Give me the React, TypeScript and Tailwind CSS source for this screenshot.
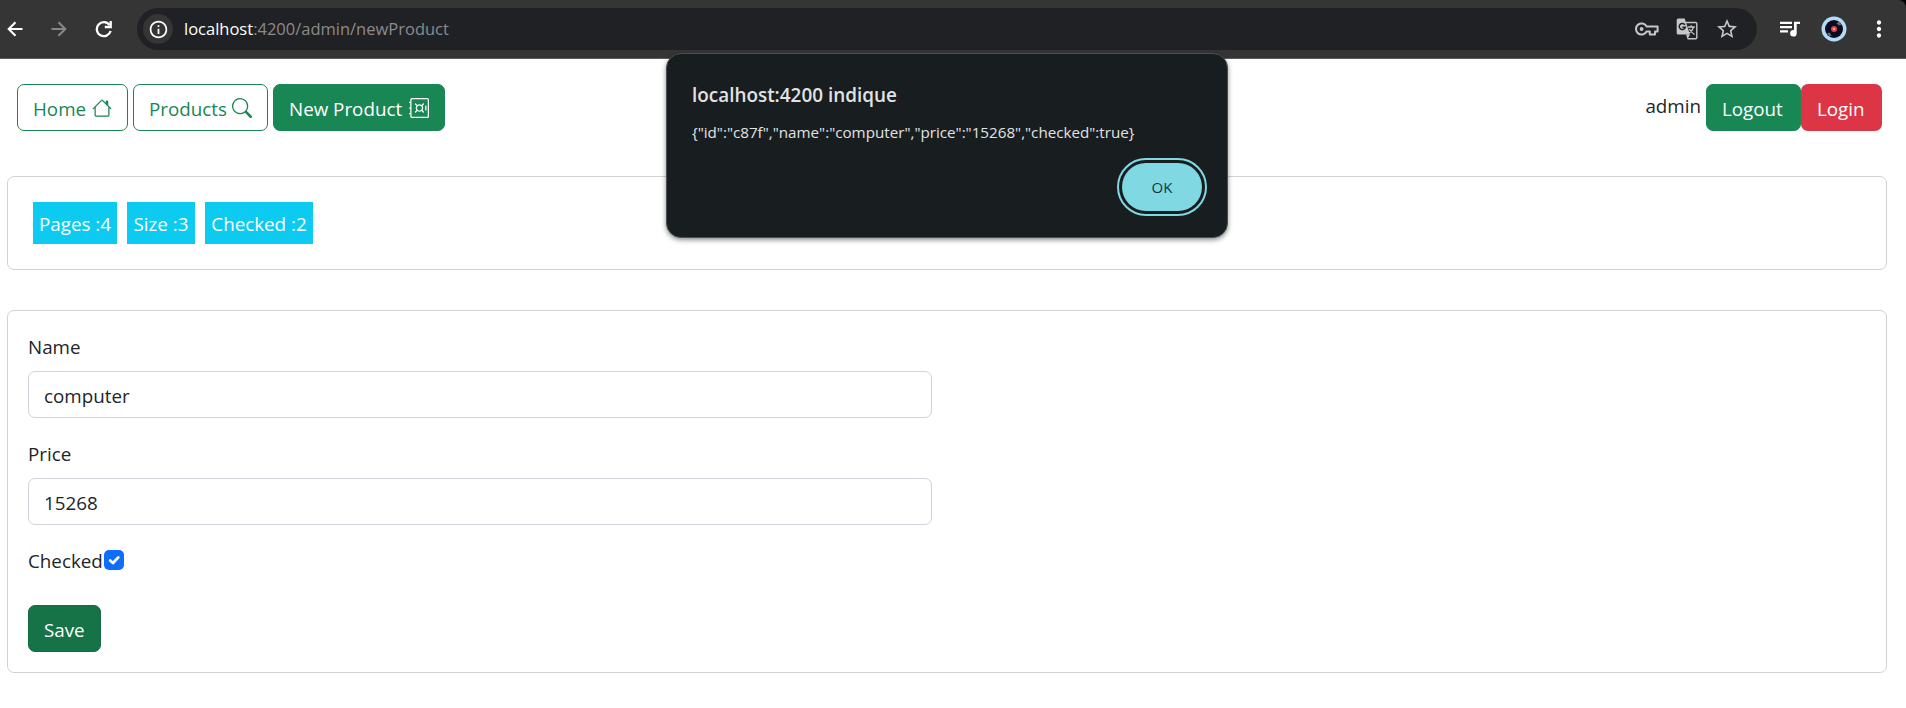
import type { ReactNode } from "react";
import { MdInfoOutline, MdStarBorder, MdMoreVert } from "react-icons/md";
import { BsHouse, BsSearch, BsSafe } from "react-icons/bs";

function ArrowIcon({ className }: { className: string }) {
  return (
    <svg viewBox="0 0 16 16" className={`size-4 ${className}`} fill="none" stroke="currentColor" strokeWidth="2.1">
      <path d="M15.500 8H2M8.500 1.200L1.700 8L8.500 14.800" />
    </svg>
  );
}

function ReloadIcon() {
  return (
    <svg viewBox="0 0 18 18" className="ml-[28px] size-[18px]" fill="none" stroke="currentColor" strokeWidth="2.3">
      <path d="M14.6 5.2A7 7 0 1 0 15.6 11" />
      <path d="M15.7 1v6H9.8" />
    </svg>
  );
}

function KeyIcon() {
  return (
    <svg viewBox="0 0 24 14" className="h-[14px] w-[24px]" fill="none" stroke="currentColor" strokeWidth="2">
      <path d="M11.6 4.5A5.6 5.6 0 1 0 11.6 9.5H14.8V12.4H20V9.5H22.6V4.5Z" strokeLinejoin="round" />
      <circle cx="6.6" cy="7" r="1.9" fill="currentColor" stroke="none" />
    </svg>
  );
}

function TranslateIcon() {
  return (
    <svg viewBox="0 0 22 22" className="ml-[17px] size-[22px]" fill="none">
      <path d="M10 4.5H19.6Q20.8 4.500 20.8 5.700V19.600Q20.8 20.800 19.600 20.800H11.500" stroke="currentColor" strokeWidth="1.4" />
      <path d="M2.200 0.500H8.700L14 16.500H2.200Q0.700 16.500 0.700 15V2Q0.700 0.500 2.200 0.500Z" fill="currentColor" />
      <path d="M10 16.500H14L11.500 21Z" fill="currentColor" />
      <path d="M8.900 6.800A3.100 3.100 0 1 0 9.300 9.300H6.400" stroke="#202124" strokeWidth="1.500" />
      <path d="M11.800 9H18.800M15.200 7.300V9M17.500 9Q16.500 13 13 15M13.300 11Q15 14 18.500 16.500" stroke="currentColor" strokeWidth="1.300" />
    </svg>
  );
}

function QueueIcon() {
  return (
    <svg viewBox="0 0 20 16" className="ml-[1px] h-[16px] w-[20px]" fill="currentColor">
      <path d="M0 0.700h12v2.200H0zM0 5h12v2.200H0zM0 9.300h8v2.200H0z" />
      <path d="M14 0.700h6v2.300h-3.300v9.200a3.300 3.300 0 1 1-2.700-3.200z" />
    </svg>
  );
}

function Toolbar() {
  return (
    <div className="bg-black">
      <header className="flex h-[59px] items-start rounded-tr-[8px] border-b border-[#5c5c5c] bg-[#353535] text-white">
        <div className="flex w-[137px] shrink-0 items-center pt-[20px]">
          <ArrowIcon className="ml-[7px]" />
          <ArrowIcon className="ml-[28px] rotate-180 text-[#868686]" />
          <ReloadIcon />
        </div>
        <div className="mt-2 flex h-[42px] w-[1620px] shrink-0 items-center rounded-full bg-[#202124] pl-[6px]">
          <span className="flex size-[30px] items-center justify-center rounded-full bg-[#353535]">
            <MdInfoOutline className="size-[21px]" />
          </span>
          <p className="ml-[11px] pt-px text-[16.5px] whitespace-nowrap text-[#8a8b8d]">
            <span className="text-white">localhost</span>:4200/admin/newProduct
          </p>
          <div className="ml-auto flex items-center pr-[18px] text-[#c7c7c7]">
            <KeyIcon />
            <TranslateIcon />
            <MdStarBorder className="ml-[17px] size-[24px]" />
          </div>
        </div>
        <div className="flex items-center pt-[16px] pl-[22px]">
          <QueueIcon />
          <svg viewBox="0 0 26 26" className="ml-[21px] size-[26px]">
            <circle cx="13" cy="13" r="12.5" fill="#b3dcf8" />
            <circle cx="13" cy="13" r="9" fill="#0b0b1e" />
            <path d="M15.500 7.500L18 5.500L20.500 8.500L18 9.500ZM6 17.500L8.500 16.500L10.500 19.500L8.500 20.500Z" fill="#6b6b75" />
            <circle cx="13" cy="13" r="3" fill="#e8385f" />
            <circle cx="13" cy="13" r="1.200" fill="#ffc04a" />
          </svg>
          <MdMoreVert className="ml-[19px] size-[26px]" />
        </div>
      </header>
    </div>
  );
}

function Stat({ className, children }: { className: string; children: ReactNode }) {
  return (
    <span className={`flex h-[42px] items-center justify-center bg-[#0dcaf0] pt-[2px] whitespace-nowrap text-white ${className}`}>
      {children}
    </span>
  );
}

function Field({ label, value }: { label: string; value: string }) {
  return (
    <div className="mb-[19px]">
      <label className="block h-[41px] pt-[2px] leading-[30px]">{label}</label>
      <input
        defaultValue={value}
        className="block h-[47px] w-[904px] rounded-[7px] border border-[#ced4da] px-[15px] pt-[2px] outline-none"
      />
    </div>
  );
}

const navButton =
  "flex h-[47px] items-center rounded-[7px] border border-[#198754] pl-[15px] pt-[3px] whitespace-nowrap";

function Alert() {
  return (
    <div
      role="alertdialog"
      className="absolute top-[53px] left-[666px] flex h-[185px] w-[562px] flex-col rounded-[15px] border border-[#4a5052] bg-[#181d1f] px-[25px] text-[#e1e3e3] shadow-[0_2px_5px_rgba(0,0,0,0.45)]"
    >
      <h2 className="mt-[27px] text-[18.9px] leading-[28px] font-semibold">localhost:4200 indique</h2>
      <p className="mt-[13px] text-[15.2px] leading-[20px] whitespace-nowrap">
        {'{"id":"c87f","name":"computer","price":"15268","checked":true}'}
      </p>
      <button className="mt-[21px] ml-auto flex h-[48px] w-[80px] items-center justify-center rounded-full bg-[#80d8e3] text-[15px] font-medium text-[#12393e] outline-2 outline-offset-3 outline-[#80d8e3]">
        OK
      </button>
    </div>
  );
}

export default function App() {
  return (
    <div className="relative h-[708px] overflow-hidden bg-white font-['Open_Sans','Noto_Sans',sans-serif] text-[18.8px] text-[#212529]">
      <Toolbar />
      <nav className="flex h-[117px] items-start gap-[5px] pt-[25px] pr-[24px] pl-[17px]">
        <a className={`${navButton} w-[111px] text-[#198754]`}>
          Home <BsHouse className="mb-[3px] ml-[6px] size-5" />
        </a>
        <a className={`${navButton} w-[135px] text-[#198754]`}>
          Products <BsSearch className="mb-[3px] ml-[5px] size-5" />
        </a>
        <a className={`${navButton} w-[172px] bg-[#198754] text-white`}>
          New Product <BsSafe className="mb-[3px] ml-[7px] size-5" />
        </a>
        <span className="ml-auto pt-[8px]">admin</span>
        <div className="flex">
          <button className={`${navButton} w-[95px] bg-[#198754] text-white`}>Logout</button>
          <button className="flex h-[47px] w-[81px] items-center rounded-[7px] bg-[#dc3545] pt-[3px] pl-[16px] text-white">
            Login
          </button>
        </div>
      </nav>
      <main className="pr-[19px] pl-[7px]">
        <section className="flex h-[94px] gap-[10px] rounded-[7px] border border-[#d2d2d2] pt-[25px] pl-[25px]">
          <Stat className="w-[84px]">Pages :4</Stat>
          <Stat className="w-[68px]">Size :3</Stat>
          <Stat className="w-[108px]">Checked :2</Stat>
        </section>
        <section className="mt-[40px] h-[363px] rounded-[7px] border border-[#d2d2d2] pt-[19px] pl-[20px]">
          <Field label="Name" value="computer" />
          <Field label="Price" value="15268" />
          <label className="mt-[21px] flex h-[30px] items-center">
            <span className="w-[76px]">Checked</span>
            <svg viewBox="0 0 20 20" className="mb-[2px] size-5">
              <rect width="20" height="20" rx="5" fill="#0d6efd" />
              <path d="M6.200 10.500l2.800 2.500 5.300-5.600" fill="none" stroke="#fff" strokeWidth="2.800" strokeLinecap="round" strokeLinejoin="round" />
            </svg>
          </label>
          <button className="mt-[29px] flex h-[47px] w-[73px] items-center rounded-[7px] border border-[#146c43] bg-[#157347] pt-[3px] pl-[15px] text-white">
            Save
          </button>
        </section>
      </main>
      <Alert />
    </div>
  );
}
